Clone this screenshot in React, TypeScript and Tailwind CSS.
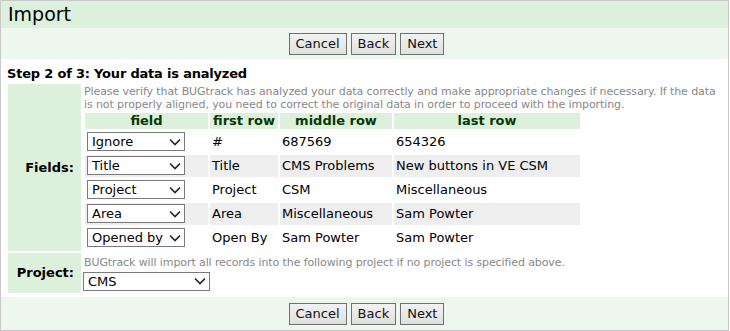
import React from "react";

const font = { fontFamily: '"DejaVu Sans", Verdana, sans-serif' };

function Chevron() {
  return (
    <svg
      width="12"
      height="8"
      viewBox="0 0 12 8"
      className="pointer-events-none absolute right-[4px] top-1/2 -translate-y-1/2"
    >
      <path d="M1 1.5 L6 6.5 L11 1.5" fill="none" stroke="#222" strokeWidth="1.6" />
    </svg>
  );
}

function Select({ value, width }: { value: string; width: string }) {
  return (
    <div className={`relative ${width}`}>
      <select
        defaultValue={value}
        className="h-[19px] w-full appearance-none border border-[#7a7a7a] bg-white pl-[4px] text-[13px] leading-[17px] text-black outline-none"
      >
        <option>{value}</option>
      </select>
      <Chevron />
    </div>
  );
}

function Buttons() {
  return (
    <div className="flex justify-center gap-[4px] pl-[4px]">
      {["Cancel", "Back", "Next"].map((b) => (
        <button
          key={b}
          className="h-[22px] border border-[#707070] bg-gradient-to-b from-[#f2f2f2] to-[#e0e0e0] px-[6px] text-[13px] leading-[20px] text-[#111]"
        >
          {b}
        </button>
      ))}
    </div>
  );
}

const rows = [
  { field: "Ignore", first: "#", middle: "687569", last: "654326" },
  { field: "Title", first: "Title", middle: "CMS Problems", last: "New buttons in VE CSM" },
  { field: "Project", first: "Project", middle: "CSM", last: "Miscellaneous" },
  { field: "Area", first: "Area", middle: "Miscellaneous", last: "Sam Powter" },
  { field: "Opened by", first: "Open By", middle: "Sam Powter", last: "Sam Powter" },
];

export default function App() {
  return (
    <div style={font} className="h-[331px] w-[729px] border border-[#c8c8c8] bg-white text-black">
      <div className="flex h-[27px] items-center bg-[#dcf0dc] px-[7px] text-[19px] leading-none">
        Import
      </div>
      <div className="flex h-[31px] items-center bg-[#eef7ee] pt-[1px]">
        <div className="w-full">
          <Buttons />
        </div>
      </div>

      <div className="px-[6px] pt-[7px]">
        <div className="text-[13px] font-bold leading-[16px] tracking-[-0.2px]">
          Step 2 of 3: Your data is analyzed
        </div>
        <table className="-ml-[1px] border-separate border-spacing-[2px]">
          <tbody>
            <tr>
              <td className="w-[73px] bg-[#dcf0dc] pr-[7px] text-right align-middle text-[13px] font-bold">
                Fields:
              </td>
              <td className="p-0 align-top">
                <div className="pl-[1px] pt-[1px] text-[11px] leading-[13px] tracking-[-0.1px] text-[#888]">
                  Please verify that BUGtrack has analyzed your data correctly and make appropriate changes if necessary. If the data is not properly aligned, you need to correct the original data in order to proceed with the importing.
                </div>
                <table className="border-separate border-spacing-[2px] text-[13px]">
                  <thead>
                    <tr className="bg-[#dcf0dc] text-[#063806]">
                      <th className="h-[16px] w-[123px] p-0 text-center leading-[16px]">field</th>
                      <th className="w-[68px] p-0 text-center leading-[16px]">first row</th>
                      <th className="w-[112px] p-0 text-center leading-[16px]">middle row</th>
                      <th className="w-[186px] p-0 text-center leading-[16px]">last row</th>
                    </tr>
                  </thead>
                  <tbody>
                    {rows.map((r, i) => (
                      <tr key={r.field} className={i % 2 === 1 ? "bg-[#eeeeee]" : "bg-white"}>
                        <td className="h-[22px] px-[2px] py-0">
                          <Select value={r.field} width="w-[98px]" />
                        </td>
                        <td className="px-[2px] py-0">{r.first}</td>
                        <td className="px-[2px] py-0">{r.middle}</td>
                        <td className="px-[2px] py-0">{r.last}</td>
                      </tr>
                    ))}
                  </tbody>
                </table>
              </td>
            </tr>
            <tr>
              <td className="h-[38px] bg-[#dcf0dc] pr-[7px] text-right align-middle text-[13px] font-bold">
                Project:
              </td>
              <td className="p-0 align-top">
                <div className="pl-[1px] pt-[3px] text-[11px] leading-[13px] tracking-[-0.1px] text-[#888]">
                  BUGtrack will import all records into the following project if no project is specified above.
                </div>
                <Select value="CMS" width="w-[127px]" />
              </td>
            </tr>
          </tbody>
        </table>
      </div>

      <div className="mt-[2px] flex h-[33px] items-center bg-[#eef7ee]">
        <div className="w-full">
          <Buttons />
        </div>
      </div>
    </div>
  );
}
